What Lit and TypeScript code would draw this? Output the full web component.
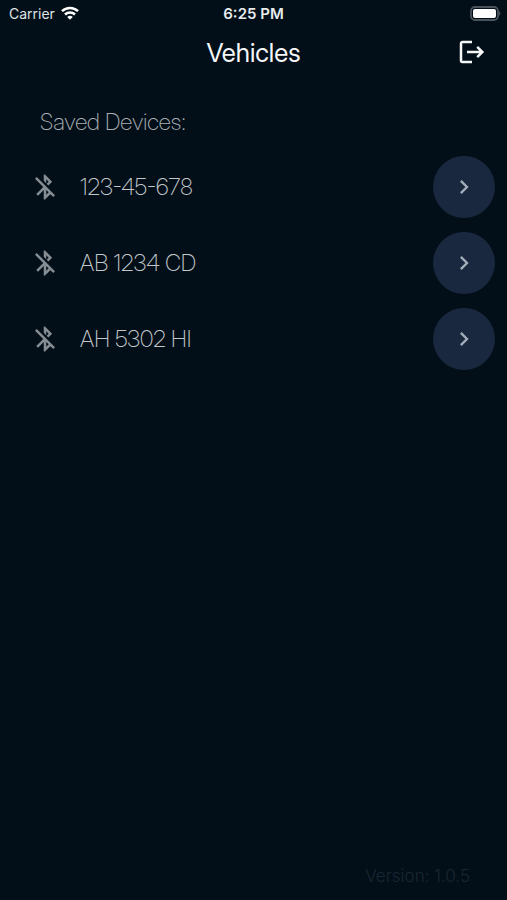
import { LitElement, html, css } from "lit";
import { customElement } from "lit/decorators.js";

const DEVICES = ["123-45-678", "AB 1234 CD", "AH 5302 HI"];

@customElement("app-root")
export class AppRoot extends LitElement {
  static styles = css`
    :host {
      display: flex;
      flex-direction: column;
      min-height: 100vh;
      box-sizing: border-box;
      background: #020f18;
      color: #f4f6f8;
      font-family: Inter, "Liberation Sans", sans-serif;
    }
    svg {
      display: block;
    }
    button {
      border: 0;
      padding: 0;
      background: none;
      color: inherit;
      cursor: pointer;
    }
    .status {
      display: grid;
      grid-template-columns: 1fr auto 1fr;
      align-items: center;
      height: 26px;
      padding: 0 6px;
      font-size: 15px;
    }
    .carrier {
      display: flex;
      align-items: center;
      gap: 6px;
      padding-left: 3px;
      font-size: 14px;
      color: #dfe3e6;
    }
    .time {
      font-weight: 600;
      color: #e8ebee;
    }
    .battery {
      justify-self: end;
    }
    .bar {
      display: grid;
      grid-template-columns: 1fr auto 1fr;
      align-items: center;
      height: 52px;
      padding: 0 20px;
    }
    h1 {
      grid-column: 2;
      margin: 0;
      font-family: "Inter Display", Inter, "Liberation Sans", sans-serif;
      font-size: 26px;
      font-weight: 400;
    }
    .logout {
      justify-self: end;
    }
    main {
      flex: 1;
      padding: 30px 12px 0 30px;
      font-family: "Inter Display", Inter, "Liberation Sans", sans-serif;
      color: #a8adb3;
    }
    h2 {
      margin: 0 10px 20px;
      font-size: 23px;
      line-height: 28px;
      font-weight: 200;
      color: #a8adb3;
    }
    ul {
      display: flex;
      flex-direction: column;
      gap: 14px;
      margin: 0;
      padding: 0;
      list-style: none;
    }
    li {
      display: flex;
      align-items: center;
      font-size: 23px;
      font-weight: 200;
      color: #c4c8cc;
    }
    .off {
      color: #858c92;
    }
    .name {
      flex: 1;
      margin-left: 20px;
    }
    .go {
      display: grid;
      place-items: center;
      width: 62px;
      height: 62px;
      border-radius: 50%;
      background: #19283f;
      color: #a3adba;
    }
    footer {
      padding: 0 37px 12px;
      text-align: right;
      font-size: 17px;
      line-height: 24px;
      font-weight: 300;
      color: #182633;
    }
  `;

  render() {
    return html`
      <div class="status">
        <span class="carrier">
          Carrier
          <svg width="18" height="14" viewBox="0 0 18 14" fill="none" stroke="#fff" stroke-width="2.5" aria-hidden="true">
            <path d="M1 5.2a11.4 11.4 0 0 1 16 0" />
            <path d="M4 8.5a7.1 7.1 0 0 1 10 0" />
            <path d="M9 13.8 6.2 11a4 4 0 0 1 5.6 0z" fill="#fff" stroke="none" />
          </svg>
        </span>
        <span class="time">6:25 PM</span>
        <svg class="battery" width="31" height="15" viewBox="0 0 31 15" aria-hidden="true">
          <rect x="1" y="1" width="27" height="13" rx="4" fill="#020f18" stroke="#4a525a" stroke-width="1.8" />
          <rect x="3" y="3" width="23" height="9" rx="2" fill="#fff" />
          <path d="M29 5.3v4.4a2.4 2.4 0 0 0 0-4.4z" fill="#4a525a" />
        </svg>
      </div>
      <header class="bar">
        <h1>Vehicles</h1>
        <button class="logout" aria-label="Log out">
          <svg width="28" height="28" viewBox="0 0 28 28" fill="none" stroke="#f4f6f8" stroke-width="2.5">
            <path d="M13 4H3.5a1.500 1.500 0 0 0-1.500 1.500v17a1.500 1.500 0 0 0 1.500 1.500H13" />
            <path d="M8 14h15.500M18.200 8.800 23.400 14l-5.200 5.200" />
          </svg>
        </button>
      </header>
      <main>
        <h2>Saved Devices:</h2>
        <ul>
          ${DEVICES.map(
            (name) => html`
              <li>
                <svg class="off" width="30" height="30" viewBox="0 0 24 24" fill="currentColor" aria-hidden="true">
                  <path
                    d="M13 5.830l1.880 1.880-1.600 1.600 1.410 1.410 3.020-3.020L12 2h-1v5.030l2 2v-3.200zM5.410 4L4 5.410 10.590 12 5 17.590 6.410 19 11 14.410V22h1l4.290-4.290 2.300 2.290L20 18.590 5.410 4zM13 18.170v-3.760l1.880 1.880L13 18.170z"
                  />
                </svg>
                <span class="name">${name}</span>
                <button class="go" aria-label="Open ${name}">
                  <svg width="28" height="28" viewBox="0 0 24 24" fill="currentColor">
                    <path d="M10 6 8.590 7.410 13.170 12l-4.580 4.590L10 18l6-6z" />
                  </svg>
                </button>
              </li>
            `
          )}
        </ul>
      </main>
      <footer>Version: 1.0.5</footer>
    `;
  }
}
